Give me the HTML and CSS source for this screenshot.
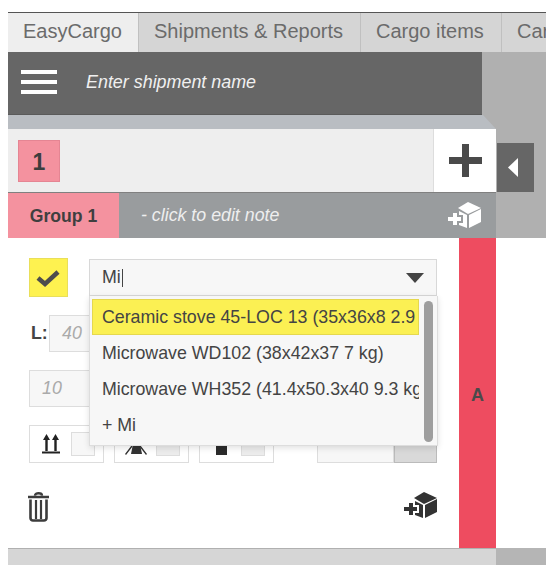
FILE: index.html
```html
<!DOCTYPE html>
<html lang="en">
<head>
    <meta charset="UTF-8">
    <title>EasyCargo</title>
    <link rel="stylesheet" href="styles.css">
</head>
<body>
    <div class="app">
        <nav class="tabs">
            <div class="tab tab-brand">EasyCargo</div>
            <div class="tab tab-shipments">Shipments &amp; Reports</div>
            <div class="tab tab-items">Cargo items</div>
            <div class="tab tab-last">Car</div>
        </nav>

        <div class="workspace">
            <header class="shipment-bar">
                <div class="burger"><span></span><span></span><span></span></div>
                <div class="shipment-name">Enter shipment name</div>
            </header>

            <div class="strip"></div>

            <div class="space-row">
                <div class="space-tabs">
                    <div class="space-num">1</div>
                    <div class="space-add">
                        <svg width="33" height="33" viewBox="0 0 33 33"><path d="M13 0h7v13h13v7H20v13h-7V20H0v-7h13z" fill="#4a4a4a"/></svg>
                    </div>
                </div>
                <div class="toggle">
                    <svg width="10" height="19" viewBox="0 0 10 19"><path d="M10 0v19L0 9.500z" fill="#fff"/></svg>
                </div>
            </div>

            <div class="group-bar">
                <div class="group-name">Group 1</div>
                <div class="group-note">- click to edit note</div>
                <svg class="group-icon" width="33" height="27" viewBox="0 0 33 27">
                    <path d="M20 0l13 6-13 6-10-6z" fill="#fff"/>
                    <path d="M11 9l8 4v13l-8-3v-2h4v-8h-4z" fill="#fff"/>
                    <path d="M21 13l12-6v13l-12 6z" fill="#fff"/>
                    <path d="M5 11h4v4h4v4H9v4H5v-4H0v-4h5z" fill="#fff"/>
                </svg>
            </div>
        </div>

        <div class="cargo-row">
            <div class="cargo">
                <div class="form">
                    <div class="top-row">
                        <div class="check">
                            <svg width="24" height="18" viewBox="0 0 24 18"><path d="M2 9l7 6L22 3" fill="none" stroke="#4d4d4d" stroke-width="4.500"/></svg>
                        </div>
                        <div class="picker">
                            <div class="picker-input">
                                <span>Mi</span><i class="caret"></i>
                                <b class="arrow"></b>
                            </div>
                            <div class="menu">
                                <div class="menu-list">
                                    <div class="menu-item active">Ceramic stove 45-LOC 13 (35x36x8 2.9 kg)</div>
                                    <div class="menu-item">Microwave WD102 (38x42x37 7 kg)</div>
                                    <div class="menu-item">Microwave WH352 (41.4x50.3x40 9.3 kg)</div>
                                    <div class="menu-item">+ Mi</div>
                                </div>
                                <div class="scrollbar"></div>
                            </div>
                        </div>
                    </div>

                    <div class="dims-row">
                        <label class="dim-label">L:</label>
                        <div class="field field-dim">40</div>
                    </div>

                    <div class="qty-row">
                        <div class="field field-qty">10</div>
                    </div>

                    <div class="flags-row">
                        <div class="flag flag-up">
                            <svg width="18" height="20" viewBox="0 0 18 20">
                                <path d="M4.500 17V5M13.500 17V5" stroke="#222" stroke-width="2.400"/>
                                <path d="M4.500 0l3.500 6H1zM13.500 0l3.500 6h-7z" fill="#222"/>
                                <path d="M0 18.500h18" stroke="#222" stroke-width="2"/>
                            </svg>
                            <div class="flag-box"></div>
                        </div>
                        <div class="flag flag-legs">
                            <svg width="22" height="22" viewBox="0 0 22 22">
                                <path d="M8 11h7l2 10H6z" fill="#333"/>
                                <path d="M7 13L0.500 21.500M15 13l6.500 8.500" fill="none" stroke="#333" stroke-width="1.300"/>
                            </svg>
                            <div class="flag-box flag-box-off"></div>
                        </div>
                        <div class="flag flag-block">
                            <svg width="11" height="22" viewBox="0 0 11 22"><path d="M0 11h11v11H0z" fill="#2b2b2b"/></svg>
                            <div class="flag-box flag-box-off"></div>
                        </div>
                        <div class="switch">
                            <div class="switch-off"></div>
                            <div class="switch-on"></div>
                        </div>
                    </div>

                    <div class="actions">
                        <svg width="21" height="30" viewBox="0 0 21 30">
                            <path d="M0 5h21M7 3.500C7 0.500 14 0.500 14 3.500" fill="none" stroke="#3c3c3c" stroke-width="2.400"/>
                            <path d="M2.500 7.500v18.500a2.500 2.500 0 0 0 2.500 2.500h11a2.500 2.500 0 0 0 2.500-2.500V7.500" fill="none" stroke="#3c3c3c" stroke-width="2.600"/>
                            <path d="M8 8v19M13 8v19" stroke="#3c3c3c" stroke-width="2.200"/>
                        </svg>
                        <svg width="33" height="27" viewBox="0 0 33 27">
                            <path d="M20 0l13 6-13 6-10-6z" fill="#333"/>
                            <path d="M11 9l8 4v13l-8-3v-2h4v-8h-4z" fill="#333"/>
                            <path d="M21 13l12-6v13l-12 6z" fill="#333"/>
                            <path d="M5 11h4v4h4v4H9v4H5v-4H0v-4h5z" fill="#333"/>
                        </svg>
                    </div>
                </div>
                <div class="cargo-side">A</div>
            </div>
        </div>

        <div class="bottom-row">
            <div class="bottom-bar"></div>
        </div>
    </div>
</body>
</html>
```

FILE: styles.css
```css
body {
    margin: 0;
    background-color: white;
    font-family: "Liberation Sans", Arial, sans-serif;
}

.app {
    width: 538px;
    margin: 12px 0 0 8px;
}

/* tabs */
.tabs {
    display: flex;
    height: 39px;
    border-top: 1px solid #555;
    overflow: hidden;
    font-size: 20px;
    line-height: 37px;
    color: #6b6b6b;
}

.tab {
    flex: none;
    box-sizing: border-box;
    background-color: #d5d5d5;
    padding-left: 15px;
    border-left: 1px solid #c0c0c0;
}

.tab-brand {
    width: 130px;
    background-color: #eeeeee;
    border-left: none;
}

.tab-shipments {
    width: 222px;
}

.tab-items {
    width: 141px;
}

.tab-last {
    width: 45px;
}

/* grey area with shipment + groups */
.workspace {
    background-color: #b0b0b0;
}

.shipment-bar {
    display: flex;
    align-items: center;
    width: 474px;
    height: 63px;
    padding-bottom: 2px;
    background-color: #666666;
    color: #f0f0f0;
    border-bottom: 1px solid #5a5a5a;
    box-sizing: border-box;
}

.burger {
    display: flex;
    flex-direction: column;
    gap: 6px;
    width: 36px;
    margin-left: 13px;
    margin-right: 29px;
}

.burger span {
    height: 4px;
    background: white;
}

.shipment-name {
    font-size: 17.900px;
    font-style: italic;
}

.strip {
    width: 488px;
    height: 14px;
    background-color: #b9bdc2;
    clip-path: polygon(0 0, 475px 0, 488px 100%, 0 100%);
}

.space-row {
    display: flex;
    align-items: flex-end;
}

.space-tabs {
    display: flex;
    align-items: center;
    width: 488px;
    height: 63px;
    background-color: #eeeeee;
    box-sizing: border-box;
    padding-left: 10px;
}

.space-num {
    width: 42px;
    height: 42px;
    box-sizing: border-box;
    background-color: #f4929f;
    border: 1px solid #e58593;
    color: #3d3d3d;
    font-size: 23px;
    font-weight: bold;
    line-height: 42px;
    text-align: center;
}

.space-add {
    display: flex;
    align-items: center;
    justify-content: center;
    width: 63px;
    height: 63px;
    margin-left: auto;
    background-color: white;
    border-left: 1px solid #dddddd;
    box-sizing: border-box;
}

.toggle {
    display: flex;
    align-items: center;
    justify-content: center;
    width: 37px;
    height: 49px;
    margin-left: 1px;
    padding-right: 5px;
    box-sizing: border-box;
    background-color: #666666;
}

.group-bar {
    display: flex;
    align-items: center;
    width: 488px;
    height: 46px;
    background-color: #999c9e;
    border-top: 1px solid #808080;
    box-sizing: border-box;
}

.group-name {
    width: 111px;
    height: 100%;
    background-color: #f4929f;
    color: #3f3f3f;
    font-size: 17.600px;
    font-weight: bold;
    line-height: 47px;
    text-align: center;
}

.group-note {
    margin-left: 22px;
    color: #eeeeee;
    font-size: 17.800px;
    font-style: italic;
}

.group-icon {
    margin-left: auto;
    margin-right: 15px;
}

/* cargo form */
.cargo-row {
    background-color: white;
}

.cargo {
    display: flex;
    width: 488px;
    height: 310px;
}

.form {
    width: 451px;
    box-sizing: border-box;
    padding: 20px 22px 0 21px;
}

.top-row {
    display: flex;
    height: 39px;
}

.check {
    display: flex;
    align-items: center;
    justify-content: center;
    width: 39px;
    height: 39px;
    box-sizing: border-box;
    background-color: #fef250;
    border: 1px solid #e9df5a;
}

.picker {
    position: relative;
    width: 349px;
    margin-left: 21px;
    z-index: 2;
}

.picker-input {
    display: flex;
    align-items: center;
    height: 37px;
    margin-top: 1px;
    box-sizing: border-box;
    padding-left: 12px;
    background-color: #f7f7f7;
    border: 1px solid #d8d8d8;
    font-size: 17.800px;
    color: #444444;
}

.caret {
    width: 1px;
    height: 18px;
    background: #444444;
    margin-left: 1px;
}

.arrow {
    width: 0;
    height: 0;
    margin-left: auto;
    margin-right: 12px;
    border-left: 9.500px solid transparent;
    border-right: 9.500px solid transparent;
    border-top: 10px solid #444444;
}

.menu {
    position: absolute;
    left: 0;
    top: 38px;
    display: flex;
    box-sizing: border-box;
    width: 349px;
    height: 150px;
    padding: 3px 4px 0 2px;
    background-color: #f7f7f7;
    border: 1px solid #dddddd;
    border-top: none;
    box-shadow: 0 2px 6px rgba(0, 0, 0, 0.12);
}

.menu-list {
    width: 327px;
    overflow: hidden;
    font-size: 17.800px;
    color: #444444;
}

.menu-item {
    height: 36px;
    box-sizing: border-box;
    padding-left: 10px;
    white-space: nowrap;
    line-height: 36px;
    overflow: hidden;
}

.menu-item.active {
    background-color: #fbf053;
    border: 1px solid #e5d84e;
    padding-left: 9px;
    line-height: 34px;
}

.scrollbar {
    width: 9px;
    height: 141px;
    margin-top: 2px;
    margin-left: 5px;
    border-radius: 5px;
    background-color: #9e9e9e;
}

.dims-row {
    display: flex;
    align-items: center;
    height: 37px;
    margin-top: 18px;
}

.dim-label {
    width: 18px;
    margin-left: 2px;
    font-size: 17.800px;
    font-weight: bold;
    color: #444444;
}

.field {
    box-sizing: border-box;
    background-color: #f7f7f7;
    border: 1px solid #dddddd;
    color: #aaaaaa;
    font-size: 17.800px;
    font-style: italic;
}

.field-dim {
    width: 60px;
    height: 37px;
    padding-left: 12px;
    line-height: 35px;
}

.qty-row {
    margin-top: 18px;
}

.field-qty {
    width: 80px;
    height: 37px;
    padding-left: 12px;
    line-height: 35px;
}

.flags-row {
    display: flex;
    align-items: center;
    height: 38px;
    margin-top: 18px;
}

.flag {
    display: flex;
    align-items: center;
    width: 75px;
    height: 38px;
    box-sizing: border-box;
    border: 1px solid #dddddd;
    margin-right: 10px;
}

.flag-up {
    padding-left: 12px;
}

.flag-legs {
    padding-left: 10px;
}

.flag-block {
    padding-left: 16px;
}

.flag-box {
    width: 24px;
    height: 24px;
    margin-left: auto;
    margin-right: 8px;
    background-color: #f7f7f7;
    border: 1px solid #dddddd;
    box-sizing: border-box;
}

.flag-box-off {
    background-color: #ececec;
}

.switch {
    display: flex;
    margin-left: 33px;
    height: 38px;
}

.switch-off {
    width: 77px;
    background-color: #f7f7f7;
    border: 1px solid #dddddd;
    box-sizing: border-box;
}

.switch-on {
    width: 43px;
    background-color: #d9d9d9;
    border: 1px solid #bbbbbb;
    box-sizing: border-box;
}

.actions {
    display: flex;
    align-items: flex-start;
    justify-content: space-between;
    margin-top: 29px;
    margin-left: -1px;
}

.cargo-side {
    display: flex;
    align-items: center;
    justify-content: center;
    width: 37px;
    box-sizing: border-box;
    padding-top: 4px;
    background-color: #ee4c60;
    color: #4a4a4a;
    font-size: 18px;
    font-weight: bold;
}

.bottom-row {
    height: 17px;
    background-color: #b5b5b5;
}

.bottom-bar {
    width: 488px;
    height: 100%;
    background-color: #d6d6d6;
    border-top: 1px solid #b0b0b0;
    box-sizing: border-box;
}
```
